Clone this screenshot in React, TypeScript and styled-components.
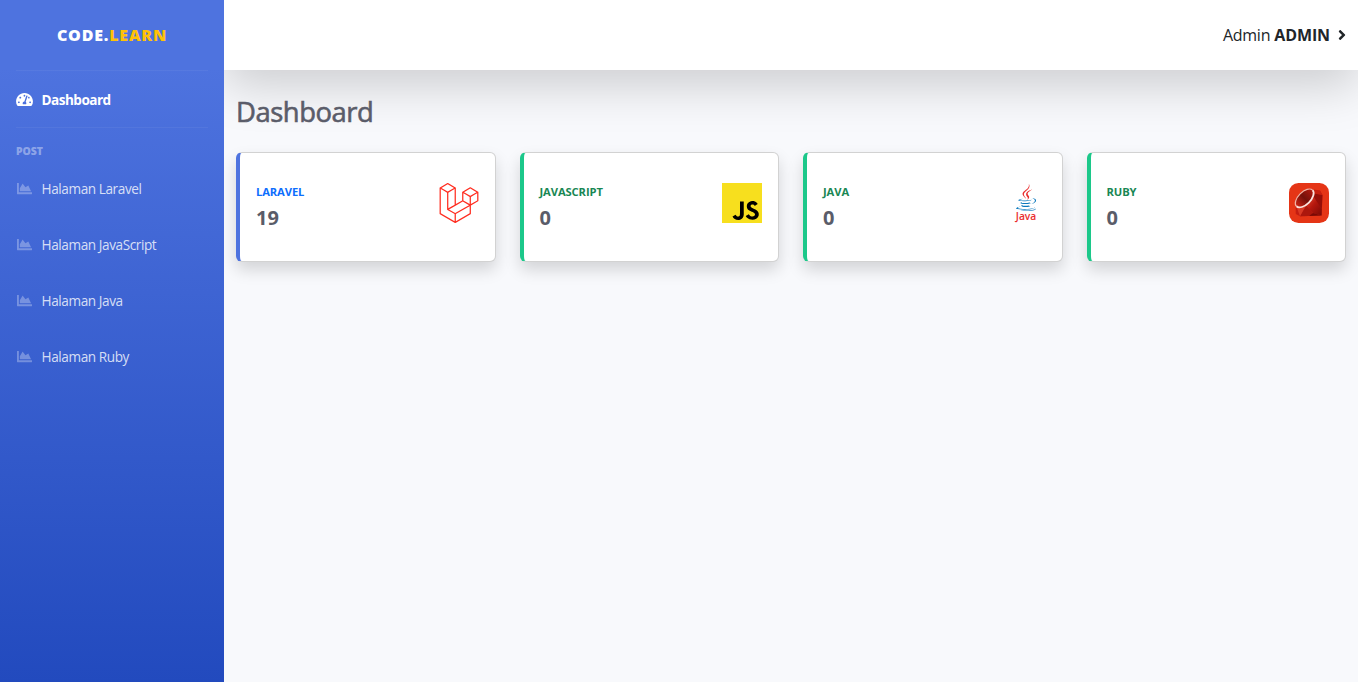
import React from "react";
import styled, { createGlobalStyle } from "styled-components";
import { FaAngleRight, FaChartArea, FaTachometerAlt } from "react-icons/fa";
import { SiJavascript, SiLaravel } from "react-icons/si";

const GlobalStyle = createGlobalStyle`
  *, *::before, *::after { box-sizing: border-box; }
  body {
    margin: 0;
    background: #f8f9fc;
    color: #212529;
    font-family: "Open Sans", "Noto Sans", sans-serif;
    font-size: 16px;
    line-height: 1.5;
  }
`;

const Page = styled.div`
  display: flex;
  height: 100vh;
  overflow: hidden;
`;

const Sidebar = styled.nav`
  display: flex;
  flex-direction: column;
  flex: 0 0 224px;
  z-index: 1;
  background: linear-gradient(180deg, #4e73df 10%, #224abe 100%);
`;

const Brand = styled.a`
  display: flex;
  align-items: center;
  justify-content: center;
  height: 70px;
  color: #fff;
  font-size: 16px;
  font-weight: 800;
  letter-spacing: 0.8px;
`;

const BrandAccent = styled.span`
  color: #ffc107;
`;

const Divider = styled.hr`
  width: 192px;
  height: 1px;
  margin: 0 16px;
  border: 0;
  background: rgba(255, 255, 255, 0.05);
`;

const NavLink = styled.a<{ $active?: boolean }>`
  display: flex;
  align-items: center;
  gap: 8.6px;
  height: 56px;
  padding: ${(p) => (p.$active ? "2px" : "0")} 16px 0;
  color: ${(p) => (p.$active ? "#fff" : "rgba(255, 255, 255, 0.8)")};
  font-size: 13.6px;
  font-weight: ${(p) => (p.$active ? 700 : 400)};
  letter-spacing: ${(p) => (p.$active ? "-0.55px" : "-0.42px")};

  svg {
    width: 17px;
    height: 15px;
    margin-top: -1px;
    color: ${(p) => (p.$active ? "#fff" : "rgba(255, 255, 255, 0.3)")};
  }
`;

const SectionHeading = styled.div`
  padding: 15px 16px 0;
  height: 33px;
  color: rgba(255, 255, 255, 0.4);
  font-size: 10.4px;
  font-weight: 800;
  line-height: 16px;
`;

const Main = styled.div`
  display: flex;
  flex-direction: column;
  flex: 1;
  min-width: 0;
`;

const Topbar = styled.header`
  display: flex;
  align-items: center;
  justify-content: flex-end;
  height: 70px;
  padding: 0 11px 0 12px;
  background: #fff;
  box-shadow: 0 16px 48px rgba(0, 0, 0, 0.175);
`;

const UserMenu = styled.a`
  display: flex;
  align-items: center;
  letter-spacing: -0.25px;

  b {
    margin-left: 4px;
    letter-spacing: -0.1px;
  }

  svg {
    width: 10px;
    height: 16px;
    margin-left: 7px;
  }
`;

const Content = styled.main`
  padding: 25px 12px;
`;

const Title = styled.h1`
  margin: 0 0 24px;
  color: #5a5c69;
  font-size: 27.4px;
  font-weight: 400;
  line-height: 33px;
  letter-spacing: -0.45px;
  -webkit-text-stroke: 0.6px #5a5c69;
`;

const CardGrid = styled.section`
  display: grid;
  grid-template-columns: repeat(4, 1fr);
  gap: 24px;
`;

const Card = styled.article<{ $accent: string }>`
  display: flex;
  align-items: center;
  justify-content: space-between;
  height: 110px;
  padding: 0 16px;
  background: #fff;
  border: 1px solid rgba(0, 0, 0, 0.175);
  border-left: 4px solid ${(p) => p.$accent};
  border-radius: 6px;
  box-shadow: 0 8px 16px rgba(0, 0, 0, 0.15);
`;

const CardText = styled.div`
  padding-bottom: 2px;
`;

const CardLabel = styled.div<{ $color: string }>`
  margin-bottom: 6px;
  color: ${(p) => p.$color};
  font-size: 11.2px;
  font-weight: 700;
  line-height: 17px;
  letter-spacing: -0.1px;
`;

const CardValue = styled.div`
  color: #5a5c69;
  font-size: 20px;
  font-weight: 700;
  line-height: 24px;
`;

const Logo = styled.div`
  display: flex;
  width: 40px;
  height: 40px;
  margin-bottom: 8px;
`;

const LaravelIcon = styled(SiLaravel)`
  width: 40px;
  height: 40px;
  color: #ff2d20;
`;

const JsIcon = styled(SiJavascript)`
  width: 40px;
  height: 40px;
  color: #f7df1e;
  background: linear-gradient(#000, #000) center / 36px 36px no-repeat;
`;

const JavaWord = styled.text`
  font-family: "Open Sans", sans-serif;
  font-size: 11.5px;
  font-weight: 600;
  fill: #ea2d2e;
`;

const JavaLogo = () => (
  <svg width="40" height="40" viewBox="0 0 40 40">
    <g transform="translate(10 1) scale(0.0527)">
      <path
        fill="#ea2d2e"
        d="M192.34 280.8c-19-42.7-83.1-80.2 0-145.8C296 53.2 242.84 0 242.84 0c21.5 84.5-75.6 110.1-110.7 162.6-23.9 35.9 11.7 74.4 60.2 118.2zm114.6-176.2c.1 0-175.2 43.8-91.5 140.2 24.7 28.4-6.5 54-6.5 54s62.7-32.4 33.9-72.9c-26.9-37.8-47.5-56.6 64.1-121.3z"
      />
      <path
        fill="#0b78bd"
        d="M277.74 312.9c9.8-6.7 23.4-12.5 23.4-12.5s-38.7 7-77.2 10.2c-47.1 3.9-97.7 4.7-123.1 1.3-60.1-8 33-30.1 33-30.1s-36.1-2.4-80.6 19c-52.5 25.4 130 37 224.5 12.1zM300.84 375.1a12.19 12.19 0 0 1-2 2.6c128.3-33.7 81.1-118.9 19.8-97.3a17.33 17.33 0 0 0-8.2 6.3 70.45 70.45 0 0 1 11-3c31-6.5 75.5 41.5-20.6 91.4zM348 437.4s14.5 11.9-15.9 21.2c-57.9 17.5-240.8 22.8-291.6.7-18.3-7.9 16-19 26.8-21.3 11.2-2.4 17.7-2 17.7-2-20.3-14.3-131.3 28.1-56.4 40.2C232.84 509.4 401 461.3 348 437.4zM124.44 396c-78.7 22 47.9 67.4 148.1 24.5a185.89 185.89 0 0 1-28.2-13.8c-44.7 8.5-65.4 9.1-106 4.5-33.5-3.8-13.9-15.2-13.9-15.2zm179.8 97.2c-78.7 14.8-175.8 13.1-233.3 3.6 0-.1 11.8 9.7 72.4 13.6 92.2 5.9 233.8-3.3 237.1-46.9 0 0-6.4 16.5-76.2 29.7zM260.64 353c-59.2 11.4-93.5 11.1-136.8 6.6-33.5-3.5-11.6-19.7-11.6-19.7-86.8 28.8 48.2 61.4 169.5 25.9a60.37 60.37 0 0 1-21.1-12.8z"
      />
    </g>
    <JavaWord x="9.8" y="37.3" textLength="20.5" lengthAdjust="spacingAndGlyphs">
      Java
    </JavaWord>
  </svg>
);

const RubyLogo = () => (
  <svg width="40" height="40" viewBox="0 0 40 40">
    <defs>
      <linearGradient id="rubyTable" x1="0" y1="0.5" x2="1" y2="0.5">
        <stop offset="0" stopColor="#cf2415" />
        <stop offset="0.5" stopColor="#74100a" />
        <stop offset="1" stopColor="#b3190f" />
      </linearGradient>
      <linearGradient id="rubyFront" x1="0" y1="0" x2="1" y2="1">
        <stop offset="0" stopColor="#e5482f" />
        <stop offset="0.45" stopColor="#b5170d" />
        <stop offset="1" stopColor="#7a0a05" />
      </linearGradient>
    </defs>
    <rect width="40" height="40" rx="9.5" fill="#e53516" />
    <path d="M6.6 23 L15 11 L24 6.5 L31 7.5 L33.6 12 L32.6 32.5 L11 33.2 L6.8 31 Z" fill="#c41d11" />
    <path d="M24.6 10 L33.4 12 L32.8 26 L25 18 Z" fill="#960f08" />
    <path d="M17 22.5 L24.8 14 L32.8 26 L32.6 32.5 L24 30 Z" fill="url(#rubyFront)" />
    <path d="M17 22.5 L24 30 L20 33 L11 33.2 Z" fill="#ac170d" />
    <path d="M8 25 L17 22.5 L11 33.2 Z" fill="#d93a25" />
    <path d="M24 30 L32.6 32.5 L20 33 Z" fill="#7a0a05" />
    <path d="M24.5 7 L31 7.8 L33.3 12 L25 10.5 Z" fill="#c7200f" />
    <ellipse cx="15.5" cy="15.2" rx="11.6" ry="6.4" transform="rotate(-45 15.5 15.2)" fill="url(#rubyTable)" />
    <path
      d="M-11.4 0 A11.4 6.2 0 0 0 11.4 0"
      transform="translate(15.5 15.2) rotate(-45)"
      fill="none"
      stroke="#fbe3dd"
      strokeWidth="1.8"
    />
    <path
      d="M-11.4 0 A11.4 6.2 0 0 1 11.4 0"
      transform="translate(15.5 15.2) rotate(-45)"
      fill="none"
      stroke="#f0b5a8"
      strokeWidth="1.2"
    />
  </svg>
);

const cards = [
  { label: "LARAVEL", value: 19, accent: "#4e73df", color: "#0d6efd", logo: <LaravelIcon /> },
  { label: "JAVASCRIPT", value: 0, accent: "#1cc88a", color: "#198754", logo: <JsIcon /> },
  { label: "JAVA", value: 0, accent: "#1cc88a", color: "#198754", logo: <JavaLogo /> },
  { label: "RUBY", value: 0, accent: "#1cc88a", color: "#198754", logo: <RubyLogo /> },
];

const posts = ["Halaman Laravel", "Halaman JavaScript", "Halaman Java", "Halaman Ruby"];

export default function App() {
  return (
    <>
      <GlobalStyle />
      <Page>
        <Sidebar>
          <Brand>
            <span>
              CODE.<BrandAccent>LEARN</BrandAccent>
            </span>
          </Brand>
          <Divider />
          <NavLink $active>
            <FaTachometerAlt />
            Dashboard
          </NavLink>
          <Divider />
          <SectionHeading>POST</SectionHeading>
          {posts.map((post) => (
            <NavLink key={post}>
              <FaChartArea />
              {post}
            </NavLink>
          ))}
        </Sidebar>
        <Main>
          <Topbar>
            <UserMenu>
              Admin <b>ADMIN</b>
              <FaAngleRight />
            </UserMenu>
          </Topbar>
          <Content>
            <Title>Dashboard</Title>
            <CardGrid>
              {cards.map((card) => (
                <Card key={card.label} $accent={card.accent}>
                  <CardText>
                    <CardLabel $color={card.color}>{card.label}</CardLabel>
                    <CardValue>{card.value}</CardValue>
                  </CardText>
                  <Logo>{card.logo}</Logo>
                </Card>
              ))}
            </CardGrid>
          </Content>
        </Main>
      </Page>
    </>
  );
}
